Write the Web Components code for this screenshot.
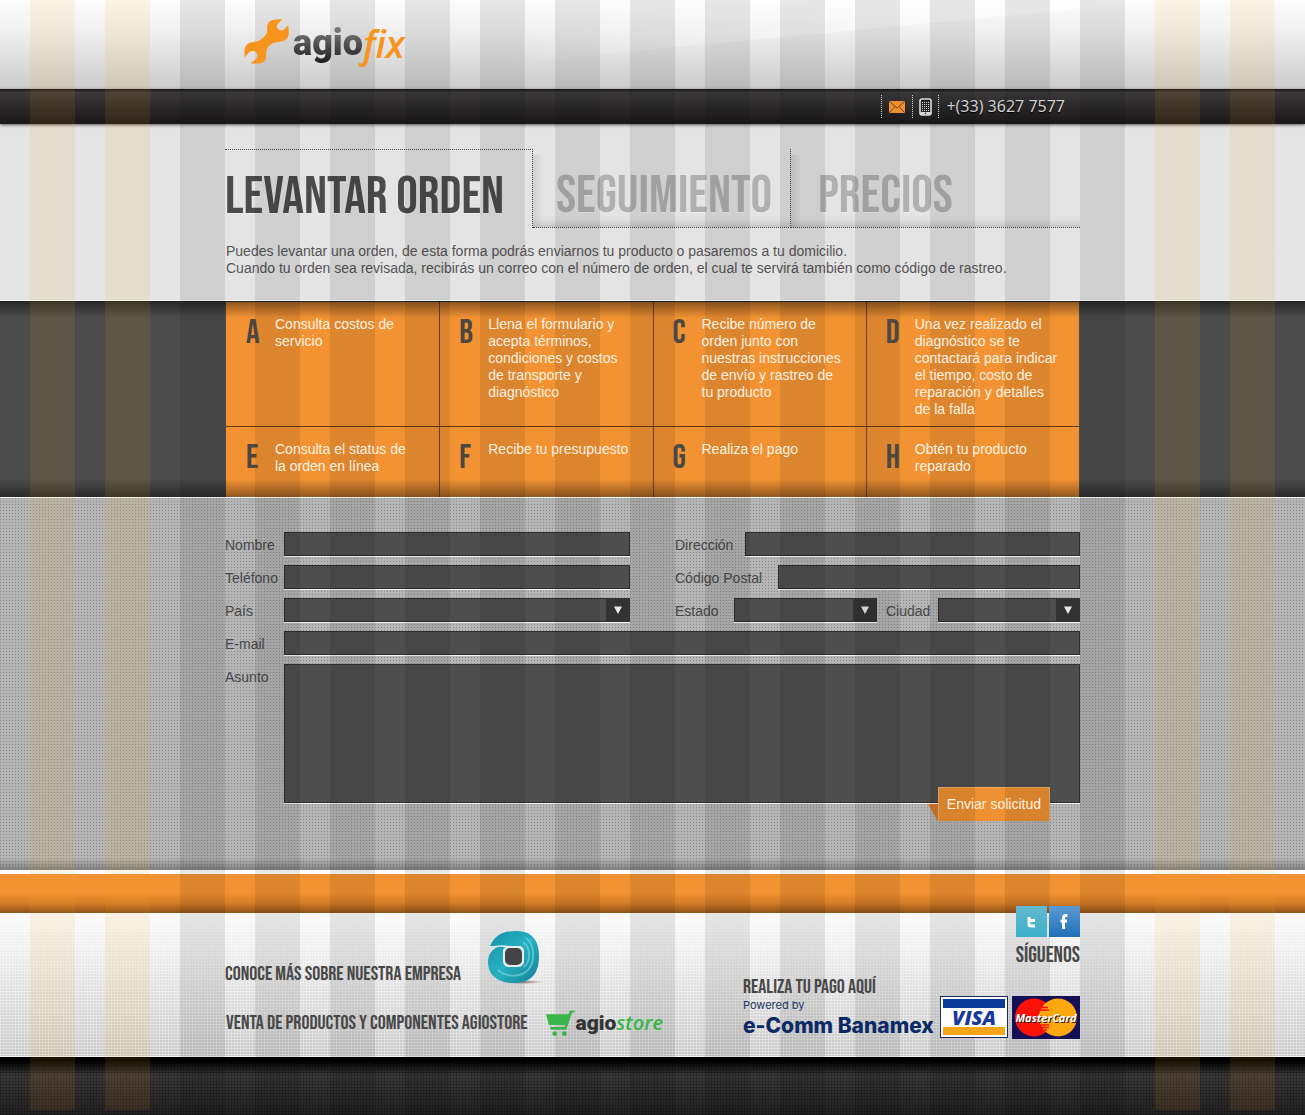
<!DOCTYPE html>
<html lang="es">
<head>
<meta charset="utf-8">
<meta name="viewport" content="width=device-width, initial-scale=1">
<title>agiofix</title>
<style>
  html { height: 100%; }
  body {
    margin: 0;
    min-height: 100%;
    position: relative;
    overflow-x: hidden;
    display: flex;
    flex-direction: column;
    background: #1f1d1e;
    font: 14px/17px "Liberation Sans", Arial, sans-serif;
    color: #545454;
    --page: 855px;
    --ink: #484848;
    --display: "Bebas Neue", "Noto Sans ExtraCondensed", "Roboto Condensed", "Open Sans Condensed", "Liberation Sans Narrow", sans-serif;
  }
</style>
</head>
<body>
<page-stripes></page-stripes>
<site-header></site-header>
<contact-bar></contact-bar>
<order-intro></order-intro>
<step-band>
  <step-card letter="A">Consulta costos de servicio</step-card>
  <step-card letter="B">Llena el formulario y acepta términos, condiciones y costos de transporte y diagnóstico</step-card>
  <step-card letter="C">Recibe número de orden junto con nuestras instrucciones de envío y rastreo de tu producto</step-card>
  <step-card letter="D">Una vez realizado el diagnóstico se te contactará para indicar el tiempo, costo de reparación y detalles de la falla</step-card>
  <step-card letter="E">Consulta el status de la orden en línea</step-card>
  <step-card letter="F">Recibe tu presupuesto</step-card>
  <step-card letter="G">Realiza el pago</step-card>
  <step-card letter="H">Obtén tu producto reparado</step-card>
</step-band>
<order-form></order-form>
<site-footer></site-footer>

<script>
const define = (name, html, setup) => {
  const template = document.createElement('template');
  template.innerHTML = html;
  customElements.define(name, class extends HTMLElement {
    constructor() {
      super();
      this.attachShadow({ mode: 'open' }).append(template.content.cloneNode(true));
    }
    connectedCallback() {
      if (setup) setup(this, this.shadowRoot);
    }
  });
};

define('page-stripes', `
  <style>
    :host {
      position: absolute; inset: 0; z-index: 1; pointer-events: none;
      display: grid; justify-content: center;
      grid-template-columns: 120px 30px 945px 30px 120px;
    }
    .warm { background: repeating-linear-gradient(90deg, rgba(240,150,40,.11) 0 45px, transparent 45px 75px); margin-bottom: 5px; }
    .cool { background: repeating-linear-gradient(90deg, rgba(0,0,0,.09) 0 45px, transparent 45px 75px); grid-column: 3; }
    .right { grid-column: 5; }
  </style>
  <div class="warm"></div><div class="cool"></div><div class="warm right"></div>
`);

define('site-header', `
  <style>
    :host { display: block; background: linear-gradient(#fdfdfd, #f0f0f0 35%, #cbcbcb); position: relative; }
    .sheen { position: absolute; top: 0; left: 38%; width: 52%; height: 65px; }
    .inner { width: min(var(--page), 100%); margin: 0 auto; box-sizing: border-box; padding: 18px 19px 20px; position: relative; z-index: 2; }
    a { display: inline-flex; align-items: flex-start; gap: 4px; text-decoration: none; vertical-align: top; }
    .word { font: 900 36px/51px Roboto, sans-serif; background: linear-gradient(#777 12px, #231f20 44px); background-clip: text; -webkit-background-clip: text; color: transparent; }
    .fix { font: italic 600 37px/51px "Open Sans", sans-serif; color: #f7941d; margin-left: -4px; }
  </style>
  <svg class="sheen" viewBox="0 0 680 65" preserveAspectRatio="none" aria-hidden="true">
    <defs><linearGradient id="g"><stop offset="0" stop-color="#fff" stop-opacity="0"/><stop offset=".5" stop-color="#fff" stop-opacity=".4"/><stop offset="1" stop-color="#fff" stop-opacity=".7"/></linearGradient></defs>
    <path d="M0 0H680L0 64Z" fill="url(#g)"/>
  </svg>
  <div class="inner">
    <a href="#inicio" aria-label="agiofix">
      <svg width="45" height="47" viewBox="732 52 136 140" aria-hidden="true"><path fill="#f7941d" d="M848 55C815 52 799 62 802 85C803 100 795 106 786 114C770 128 750 118 738 135C732 144 733 158 734 170L748 154Q768 145 773 163Q774 172 768 175L752 188C775 190 796 189 799 170C800 150 798 143 812 132C825 120 850 127 862 113C868 105 868 92 866 72L852 87Q838 91 833 82Q828 74 836 67Z"/></svg>
      <span class="word">agio</span><span class="fix">fix</span>
    </a>
  </div>
`);

define('contact-bar', `
  <style>
    :host { display: block; background: linear-gradient(#1d1b1c 0 1px, #3b393a 3px, #191718); box-shadow: 0 1px 3px rgba(0,0,0,.6); position: relative; }
    .inner { width: min(var(--page), 100%); margin: 0 auto; box-sizing: border-box; padding: 6px 15px 6px 0; display: flex; justify-content: flex-end; position: relative; z-index: 2; }
    a { display: flex; align-items: center; height: 23px; border-left: 1px dotted #d8d8d8; text-decoration: none; }
    .tel { color: #d0d0d0; font: 16px/23px "Noto Sans", sans-serif; padding-left: 7px; text-shadow: 0 1px 1px #000; }
    .phone { padding: 0 6px; }
    .mail { padding: 0 7px; }
  </style>
  <div class="inner">
    <a class="mail" href="mailto:contacto@agiofix" aria-label="Correo"><svg width="16" height="12" viewBox="0 0 16 12"><rect width="16" height="12" rx="1.5" fill="#ee8f2f"/><path d="M1 1L8 7L15 1M1 11L6 5.5M15 11L10 5.5" fill="none" stroke="#70431c"/></svg></a>
    <a class="phone" href="tel:3336277577" aria-label="Teléfono"><svg width="13" height="18" viewBox="0 0 13 18"><rect x="1" y="1" width="11" height="16" rx="2" fill="#222" stroke="#ddd" stroke-width="1.6"/><path d="M3 4.500H10M3 6.500H10M3 8.500H10M3 10.500H10M3 12.500H10" stroke="#ddd" stroke-dasharray="1 1"/><path d="M1.500 14H11.500V16.500H1.500Z" fill="#ddd"/><circle cx="6.500" cy="15.200" r=".8" fill="#222"/></svg></a>
    <a class="tel" href="tel:3336277577">+(33) 3627 7577</a>
  </div>
`);

define('order-intro', `
  <style>
    :host { display: block; background: #e4e4e4; }
    .inner { width: min(var(--page), 100%); margin: 0 auto; padding: 25px 0 23px; }
    nav { display: grid; grid-template-columns: 308fr 258fr 289fr; }
    a { box-sizing: border-box; height: 79px; padding-left: 23px; text-decoration: none; color: #b0b0b0; font: 400 54px/94px var(--display); white-space: nowrap; text-shadow: 0 1px 0 #eee; border-bottom: 1px dotted #444; box-shadow: inset 0 -14px 10px -12px rgba(0,0,0,.2); }
    a[aria-current] { color: #4b4b4b; padding-left: 0; border: 0; border-top: 1px dotted #444; border-right: 1px dotted #444; box-shadow: none; }
    .second { border-right: 1px dotted #444; }
    .second, .third { background: linear-gradient(90deg, rgba(0,0,0,.09), transparent 10px) 0 6px no-repeat; }
    .third { padding-left: 27px; }
    p { margin: 15px 0 0; padding-left: 1px; }
  </style>
  <div class="inner">
    <nav>
      <a href="#levantar" aria-current="page">LEVANTAR ORDEN</a>
      <a class="second" href="#seguimiento">SEGUIMIENTO</a>
      <a class="third" href="#precios">PRECIOS</a>
    </nav>
    <p>Puedes levantar una orden, de esta forma podrás enviarnos tu producto o pasaremos a tu domicilio.<br>Cuando tu orden sea revisada, recibirás un correo con el número de orden, el cual te servirá también como código de rastreo.</p>
  </div>
`);

define('step-band', `
  <style>
    :host { display: block; background: #4c4c4c; border-top: 1px solid #fff; border-bottom: 1px solid #fff; }
    .shade { background: linear-gradient(rgba(0,0,0,.45), transparent 16px, transparent calc(100% - 18px), rgba(0,0,0,.45)); border-top: 1px solid #222; }
    .grid { width: min(var(--page) - 2px, 100%); margin: 0 auto; display: grid; grid-template-columns: repeat(4, 1fr); grid-template-rows: auto 70px; background: linear-gradient(rgba(0,0,0,.4), transparent 16px, transparent calc(100% - 18px), rgba(0,0,0,.4)), #f29233; }
  </style>
  <div class="shade"><div class="grid"><slot></slot></div></div>
`);

define('step-card', `
  <style>
    :host { display: grid; grid-template-columns: 14px 1fr; column-gap: 15px; padding: 14px 20px 8px 19px; color: #fff2e2; border-left: 1px solid rgba(60,35,10,.7); border-bottom: 1px solid rgba(60,35,10,.8); min-width: 0; }
    :host(:nth-child(4n+1)) { border-left: 0; padding-left: 20px; }
    :host(:nth-child(n+5)) { border-bottom: 0; }
    b { font: 400 34px/34px var(--display); color: #4b4741; }
    b, span { position: relative; z-index: 2; }
  </style>
  <b></b><span><slot></slot></span>
`, (host, root) => { root.querySelector('b').textContent = host.getAttribute('letter'); });

define('form-field', `
  <style>
    :host { display: grid; grid-template-columns: var(--label, 59px) 1fr; min-width: 0; }
    label { line-height: 27px; color: var(--ink); height: 25px; white-space: nowrap; }
    .box { display: grid; grid-template-columns: minmax(0, 1fr); border-bottom: 1px solid #f4f4f4; }
    input, select, textarea { grid-area: 1 / 1; box-sizing: border-box; width: 100%; height: 24px; margin: 0; padding: 2px 6px; border: 1px solid #2e2e2e; border-radius: 0; background: #4e4e4e; color: #eee; font: inherit; appearance: none; outline-offset: 2px; }
    textarea { height: 139px; resize: none; display: block; }
    svg { grid-area: 1 / 1; justify-self: end; pointer-events: none; }
  </style>
  <label for="control"></label><div class="box"></div>
`, (host, root) => {
  root.querySelector('label').textContent = host.getAttribute('label');
  const box = root.querySelector('.box');
  if (box.firstChild) return;
  const kind = host.getAttribute('kind') || 'input';
  const control = document.createElement(kind);
  control.id = 'control';
  control.name = host.getAttribute('name');
  if (kind === 'input') control.type = host.getAttribute('type') || 'text';
  box.append(control);
  if (kind === 'select') {
    control.append(new Option('', ''));
    box.insertAdjacentHTML('beforeend', '<svg width="24" height="24" aria-hidden="true"><path fill="#333" d="M0 0H24V24H0Z"/><path fill="#e8e8e8" d="M8 8.500H16L12 16Z"/></svg>');
  }
});

define('order-form', `
  <style>
    :host { display: block; background:
      linear-gradient(transparent calc(100% - 12px), rgba(0,0,0,.3)),
      conic-gradient(at 1px 1px, transparent 75%, rgba(0,0,0,.24) 0) 0 0 / 3px 3px, #b5b5b5;
      border-bottom: 4px solid #fff; }
    form { width: min(var(--page), 100%); margin: 0 auto; padding: 34px 0 49px; display: grid; grid-template-columns: 1fr 1fr; gap: 8px 45px; }
    .wide { grid-column: 1 / -1; }
    .pair { display: grid; grid-template-columns: 202fr 194fr; gap: 9px; }
    .direccion { --label: 70px; } .postal { --label: 103px; } .ciudad { --label: 52px; }
    button { grid-column: 2; justify-self: end; margin: -25px 30px 0 0; height: 34px; padding: 0 8px; position: relative; border: 1px solid #f3ac62; border-width: 1px 1px 0; background: #ee8f31; color: #fff2e2; font: inherit; cursor: pointer; }
    button span { position: relative; z-index: 2; }
    button::before { content: ""; position: absolute; left: -11px; bottom: 0; width: 10px; height: 17px; background: #d3762a; clip-path: polygon(0 0, 100% 0, 100% 100%); }
  </style>
  <form>
    <form-field label="Nombre" name="nombre"></form-field>
    <form-field class="direccion" label="Dirección" name="direccion"></form-field>
    <form-field label="Teléfono" name="telefono" type="tel"></form-field>
    <form-field class="postal" label="Código Postal" name="postal"></form-field>
    <form-field label="País" name="pais" kind="select"></form-field>
    <div class="pair">
      <form-field label="Estado" name="estado" kind="select"></form-field>
      <form-field class="ciudad" label="Ciudad" name="ciudad" kind="select"></form-field>
    </div>
    <form-field class="wide" label="E-mail" name="email" type="email"></form-field>
    <form-field class="wide" label="Asunto" name="asunto" kind="textarea"></form-field>
    <button type="submit"><span>Enviar solicitud</span></button>
  </form>
`);

define('visa-card', `
  <style>:host { display: block; height: 43px; } svg { display: block; } text { font: italic 800 20px "Open Sans", sans-serif; }</style>
  <svg width="68" height="43" role="img" aria-label="VISA"><rect x=".5" y=".5" width="67" height="41" fill="#fff" stroke="#1b2a63"/><path fill="#0a3a9a" d="M3 3H65V12H3Z"/><path fill="#f9a51a" d="M3 31H65V39H3Z"/><text x="34" y="29" text-anchor="middle" fill="#173a9a">VISA</text></svg>
`);

define('master-card', `
  <style>:host { display: block; height: 43px; } svg { display: block; } text { font: italic 700 11px "Open Sans", sans-serif; }</style>
  <svg width="68" height="43" role="img" aria-label="MasterCard"><rect width="68" height="43" fill="#140f57"/><circle cx="22" cy="21.500" r="19" fill="#fb1207"/><circle cx="46" cy="21.500" r="19" fill="#fba70f"/><path d="M29 11.500H36M28 14H37M28 29H37M28 31.500H37M30 34H35" stroke="#fb1207" stroke-width="1.300"/><text x="35" y="27" text-anchor="middle" fill="#401208" aria-hidden="true">MasterCard</text><text x="34" y="26" text-anchor="middle" fill="#fff">MasterCard</text></svg>
`);

define('site-footer', `
  <style>
    :host { display: flex; flex-direction: column; flex: 1; }
    .orange { height: 39px; background: linear-gradient(#f29233 50%, #d47c26 75%, #8f5218); }
    .light { background:
      repeating-linear-gradient(rgba(255,255,255,.35) 0 1px, transparent 1px 3px),
      repeating-linear-gradient(90deg, rgba(255,255,255,.3) 0 1px, transparent 1px 3px),
      linear-gradient(#fbfbfb, #c8c8c8);
      border-bottom: 1px solid #f4f4f4; }
    .dark { flex: 1; min-height: 58px; background:
      repeating-linear-gradient(rgba(0,0,0,.2) 0 1px, transparent 1px 3px),
      repeating-linear-gradient(90deg, rgba(0,0,0,.2) 0 1px, transparent 1px 3px),
      linear-gradient(#000 4px, #3a3839 18px, #232122); }
    .inner { width: min(var(--page), 100%); height: 143px; margin: 0 auto; display: flex; justify-content: space-between; position: relative; z-index: 2; }
    a { color: var(--ink); text-decoration: none; }
    .links { display: grid; align-content: start; gap: 23px; padding-top: 18px; }
    .links a { display: flex; align-items: center; gap: 19px; font: 400 20px/26px var(--display); white-space: nowrap; height: 54px; }
    .links a:first-child { gap: 27px; }
    .links a:first-child span { padding-top: 31px; }
    .links a:last-child { height: 30px; padding-left: 1px; }
    .store { display: flex; align-items: center; }
    .store b { font: 900 21px/26px Roboto, sans-serif; color: #333; }
    .store i { font: italic 600 20px/26px "Open Sans", sans-serif; color: #39b54a; }
    .right { display: flex; flex-direction: column; width: 337px; margin-top: -7px; }
    .social { align-self: flex-end; display: grid; grid-template-columns: 31px 31px; gap: 2px; }
    .social svg { display: block; }
    .social strong { grid-column: 1 / -1; font: 400 22px/33px var(--display); color: var(--ink); justify-self: end; white-space: nowrap; }
    .pay { display: flex; align-items: flex-end; justify-content: space-between; margin-top: 5px; }
    .pay h2 { margin: 0; font: 400 20px/21px var(--display); color: var(--ink); }
    .pay small { display: block; font: 11px/15px Inter, sans-serif; color: #1d3564; }
    .pay b { display: block; font: 800 21px/26px Inter, sans-serif; color: #0a2a66; white-space: nowrap; }
    .cards { display: flex; gap: 4px; }
  </style>
  <div class="orange"></div>
  <div class="light"><div class="inner">
    <div class="links">
      <a href="#empresa"><span>CONOCE MÁS SOBRE NUESTRA EMPRESA</span>
        <svg width="56" height="54" viewBox="0 0 56 54" aria-hidden="true">
          <defs><linearGradient id="a" x1="0" y1="0" x2="1" y2="1"><stop offset="0" stop-color="#1592a5"/><stop offset=".5" stop-color="#27b0c2"/><stop offset="1" stop-color="#128293"/></linearGradient>
          <radialGradient id="s"><stop offset="0" stop-color="#533" stop-opacity=".7"/><stop offset="1" stop-color="#533" stop-opacity="0"/></radialGradient></defs>
          <ellipse cx="34" cy="51" rx="22" ry="2" fill="url(#s)"/>
          <path fill="url(#a)" d="M2 15C7 4 15 0 28 0C43 0 51 8 51 25C51 43 43 52 26 52C8 52 0 43 0 31C0 23 4 18 12 15Z"/>
          <path fill="none" stroke="#8fdfe8" stroke-width="2" opacity=".5" d="M38 7C46 12 48 30 40 39C32 47 18 46 10 39M35 11C43 17 43 30 36 36"/>
          <path fill="#e2eef0" d="M2 16Q12 13 21 15L32 15Q36 16 36 20V31Q35 36 30 36H20Q15 35 15 30V20Q15 17 18 16Q9 15 2 17Z"/>
          <rect x="17" y="17" width="17" height="17" rx="5" fill="#454444"/>
        </svg></a>
      <a href="#tienda"><span>VENTA DE PRODUCTOS Y COMPONENTES AGIOSTORE</span>
        <span class="store"><svg width="29" height="27" viewBox="0 0 30 27" aria-hidden="true"><path fill="#39b54a" d="M0 4H23L25 0H30L29 2H27L21 20H5L4 17H19L20 15H3Z"/><circle cx="9" cy="24" r="2.500" fill="#39b54a"/><circle cx="19" cy="24" r="2.500" fill="#39b54a"/></svg><span><b>agio</b><i>store</i></span></span></a>
    </div>
    <div class="right">
      <div class="social">
        <a href="#twitter" aria-label="Twitter"><svg width="31" height="31"><defs><linearGradient id="t" x2="0" y2="1"><stop stop-color="#63b9cf"/><stop offset="1" stop-color="#3bb0cb"/></linearGradient></defs><path fill="url(#t)" d="M0 0H31V31H0Z"/><path fill="none" stroke="#fff" stroke-width="3" stroke-linejoin="round" d="M13 11V18Q13 20 15 20H19M12 14.500H19"/></svg></a>
        <a href="#facebook" aria-label="Facebook"><svg width="31" height="31"><defs><linearGradient id="f" x2="0" y2="1"><stop stop-color="#5b9bd3"/><stop offset="1" stop-color="#1f6fb9"/></linearGradient></defs><path fill="url(#f)" d="M0 0H31V31H0Z"/><path fill="none" stroke="#fff" stroke-width="3" d="M18.500 9.500H17Q14.500 9.500 14.500 12V23M11.500 15H18"/></svg></a>
        <strong>SÍGUENOS</strong>
      </div>
      <div class="pay">
        <div><h2>REALIZA TU PAGO AQUÍ</h2><small>Powered by</small><b>e-Comm Banamex</b></div>
        <div class="cards"><visa-card></visa-card><master-card></master-card></div>
      </div>
    </div>
  </div></div>
  <div class="dark"></div>
`);
</script>
</body>
</html>
